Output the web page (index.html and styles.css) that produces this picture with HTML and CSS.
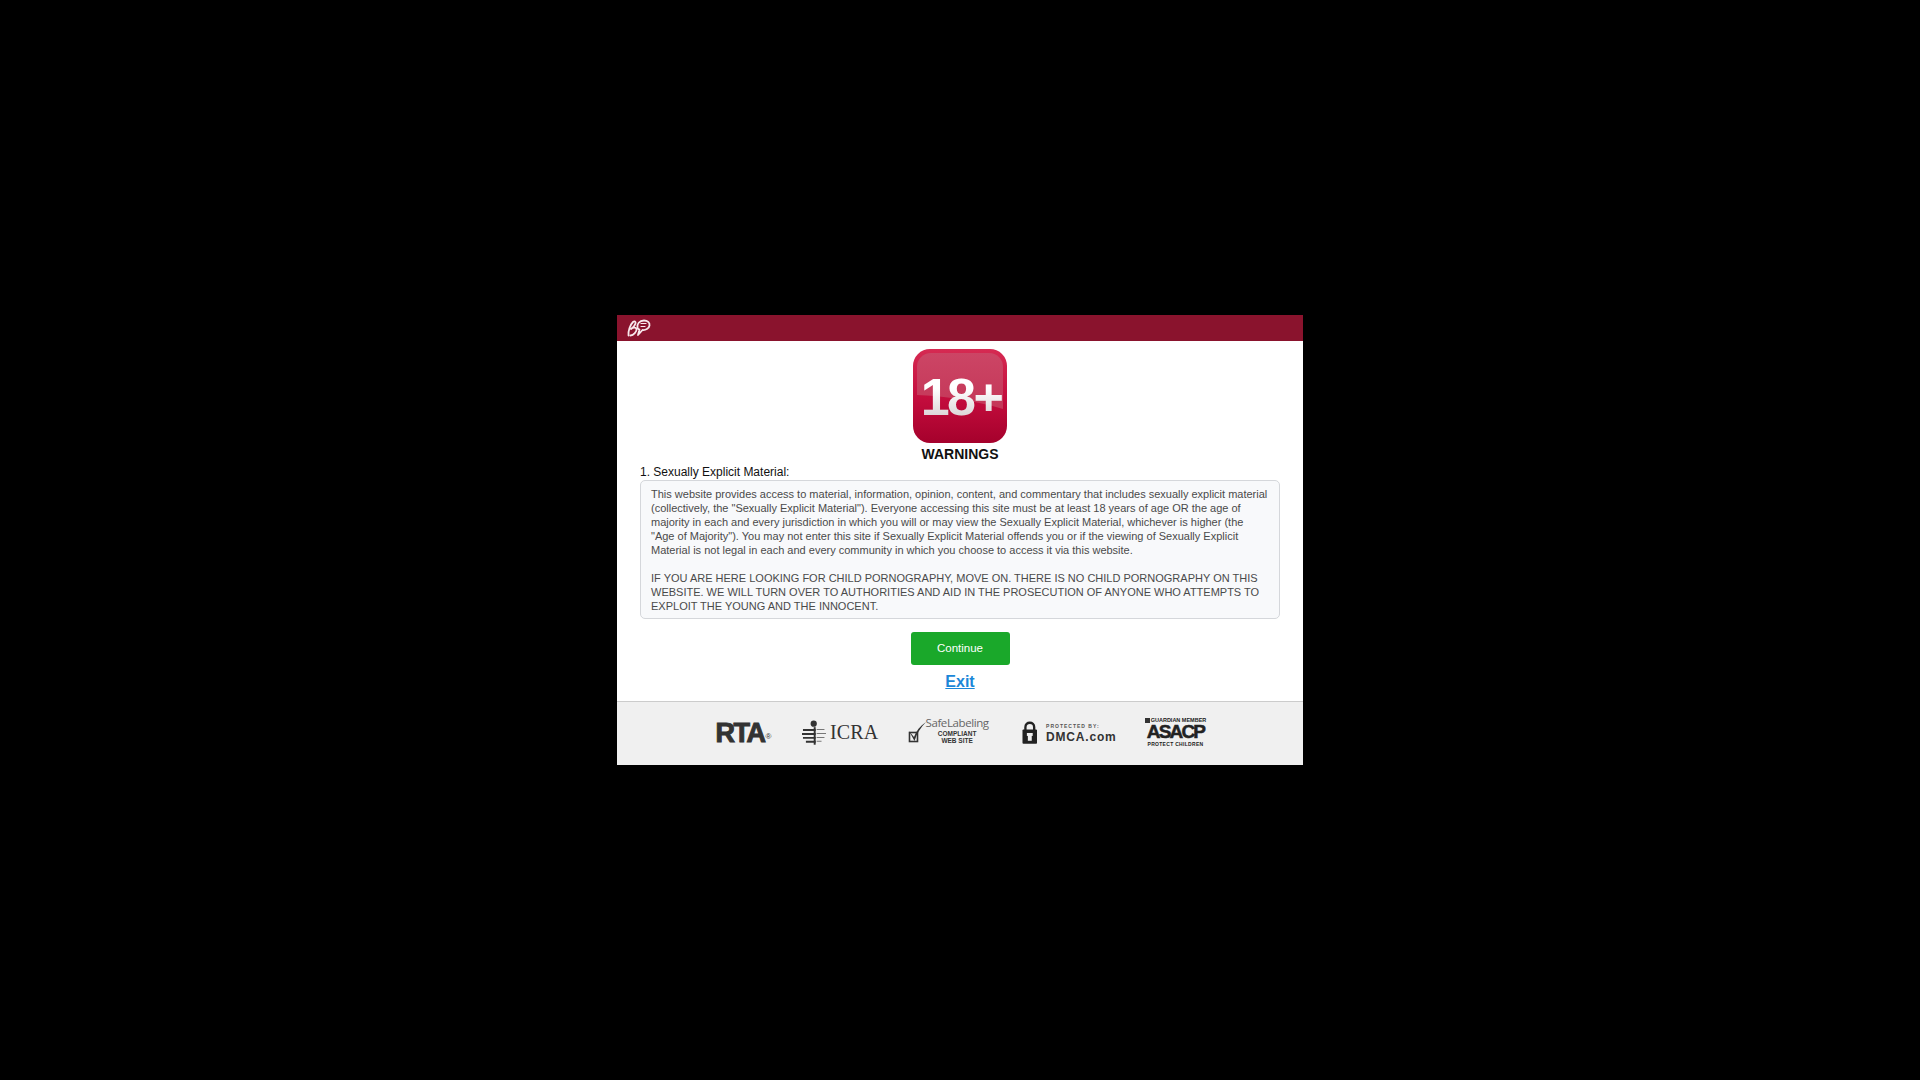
FILE: index.html
```html
<!DOCTYPE html>
<html lang="en">
<head>
    <meta charset="UTF-8">
    <meta name="viewport" content="width=device-width, initial-scale=1.0">
    <title>Warnings</title>
    <link rel="stylesheet" href="styles.css">
</head>
<body>

    <div class="modal">

        <!-- HEADER -->
        <div class="modal-header">
            <svg class="brand" width="24" height="18" viewBox="0 0 24 18" fill="none" stroke="#f8e8ec" stroke-width="1.800" stroke-linecap="round" stroke-linejoin="round">
                <path d="M1.500 16.500C1 12 3 6 6 3C7.500 1.800 9 2.500 8.500 4.500C8 6.500 6 8.500 4 10C6 8.500 9 8 9.500 10C10 12.500 6.500 16.500 3.500 16.500"/>
                <path d="M10.500 9C9.500 5 12.500 1.500 17 1.500C20.500 1.500 23 3.500 22.500 6.500C22 9.500 18.500 11.500 15.500 11L11 16L12.500 10.500C11.500 10.500 11 10 10.500 9Z"/>
                <path d="M14 4.500H19M14 7.500H18" stroke-width="1.200"/>
            </svg>
        </div>

        <!-- BODY -->
        <div class="modal-body">
            <svg class="age-icon" width="94" height="94" viewBox="0 0 94 94">
                <defs>
                    <linearGradient id="iconBase" x1="0" y1="0" x2="0" y2="1">
                        <stop offset="0" stop-color="#d62a52"/>
                        <stop offset="0.55" stop-color="#c20c3c"/>
                        <stop offset="1" stop-color="#a5012c"/>
                    </linearGradient>
                    <linearGradient id="iconGloss" x1="0" y1="0" x2="0" y2="1">
                        <stop offset="0" stop-color="#cc4565"/>
                        <stop offset="1" stop-color="#c43758"/>
                    </linearGradient>
                    <linearGradient id="digits" x1="0" y1="0" x2="0" y2="1">
                        <stop offset="0.35" stop-color="#ffffff"/>
                        <stop offset="1" stop-color="#cfc7c9"/>
                    </linearGradient>
                    <clipPath id="inner"><rect x="4" y="4" width="86" height="83" rx="14"/></clipPath>
                </defs>
                <rect width="94" height="94" rx="17" fill="url(#iconBase)"/>
                <path d="M4 46C30 47 60 51 90 60V4H4Z" fill="url(#iconGloss)" clip-path="url(#inner)"/>
                <text class="age-text" x="48" y="66" text-anchor="middle" fill="url(#digits)">18+</text>
            </svg>
            <div class="title">WARNINGS</div>

            <div class="section-label">1. Sexually Explicit Material:</div>
            <div class="terms">
                <p>This website provides access to material, information, opinion, content, and commentary that includes sexually explicit material (collectively, the "Sexually Explicit Material"). Everyone accessing this site must be at least 18 years of age OR the age of majority in each and every jurisdiction in which you will or may view the Sexually Explicit Material, whichever is higher (the "Age of Majority"). You may not enter this site if Sexually Explicit Material offends you or if the viewing of Sexually Explicit Material is not legal in each and every community in which you choose to access it via this website.</p>
                <p>IF YOU ARE HERE LOOKING FOR CHILD PORNOGRAPHY, MOVE ON. THERE IS NO CHILD PORNOGRAPHY ON THIS WEBSITE. WE WILL TURN OVER TO AUTHORITIES AND AID IN THE PROSECUTION OF ANYONE WHO ATTEMPTS TO EXPLOIT THE YOUNG AND THE INNOCENT.</p>
            </div>

            <button class="btn-continue">Continue</button>
            <a class="exit-link" href="#">Exit</a>
        </div>

        <!-- FOOTER LOGOS -->
        <div class="modal-footer">
            <div class="logo logo-rta"><span class="rta-name">RTA</span><span class="rta-reg">®</span></div>

            <div class="logo logo-icra">
                <svg width="25" height="26" viewBox="0 0 25 26">
                    <circle cx="12" cy="3.500" r="3.200" fill="#333"/>
                    <path d="M1 9H14V11H1ZM0 13H14V15H0ZM1 17H14V19H1ZM4 21H14V23H4Z" fill="#333"/>
                    <path d="M15 9H23V10H15ZM15 13H25V14H15ZM15 17H23V18H15ZM15 21H20V22H15Z" fill="#777"/>
                    <path d="M13 7V25" stroke="#333" stroke-width="2"/>
                </svg>
                <span class="icra-name">ICRA</span>
            </div>

            <div class="logo logo-safe">
                <svg width="18" height="24" viewBox="0 0 18 24" fill="none">
                    <rect x="1.500" y="11.500" width="8" height="9" stroke="#333" stroke-width="1.600"/>
                    <path d="M1 10L6 16C8 10 12 5 18 1C13 6 9 12 6.500 20Z" fill="#333"/>
                </svg>
                <div class="safe-text">
                    <span class="safe-name">SafeLabeling</span>
                    <span class="safe-sub">COMPLIANT</span>
                    <span class="safe-sub">WEB SITE</span>
                </div>
            </div>

            <div class="logo logo-dmca">
                <svg width="16" height="23" viewBox="0 0 16 23">
                    <path d="M3.500 10V6C3.500 3 5.500 1.500 8 1.500C10.500 1.500 12.500 3 12.500 6V10" fill="none" stroke="#222" stroke-width="2.400"/>
                    <rect x="0.500" y="8.500" width="15" height="14.500" rx="1" fill="#222"/>
                    <rect x="6" y="12" width="4" height="8" fill="#f0f0f0"/>
                    <rect x="5" y="12" width="6" height="3" fill="#f0f0f0"/>
                </svg>
                <div class="dmca-text">
                    <span class="dmca-small">PROTECTED BY:</span>
                    <span class="dmca-name">DMCA.com</span>
                </div>
            </div>

            <div class="logo logo-asacp">
                <span class="asacp-top"><i class="asacp-box"></i>GUARDIAN MEMBER</span>
                <span class="asacp-name">ASACP</span>
                <span class="asacp-bottom">PROTECT CHILDREN</span>
            </div>
        </div>

    </div>

</body>
</html>
```

FILE: styles.css
```css
html, body {
    height: 100%;
}
body {
    margin: 0;
    background: #000;
    font-family: 'Liberation Sans', Arial, sans-serif;
    display: flex;
    align-items: center;
    justify-content: center;
}
.modal {
    width: 686px;
    height: 450px;
    background: #fff;
    display: flex;
    flex-direction: column;
}
.modal-header {
    height: 26px;
    background: #8a132d;
    padding: 4px 0 0 10px;
    box-sizing: border-box;
}
.brand {
    display: block;
}
.modal-body {
    flex: 1;
    padding: 8px 23px 0;
    display: flex;
    flex-direction: column;
    align-items: center;
}
.age-icon {
    display: block;
}
.age-text {
    font-family: 'Liberation Sans', Arial, sans-serif;
    font-weight: bold;
    font-size: 52px;
    letter-spacing: -2.500px;
}
.title {
    font-size: 14px;
    font-weight: bold;
    line-height: 16px;
    margin-top: 3px;
    color: #111;
}
.section-label {
    align-self: flex-start;
    font-size: 12px;
    line-height: 14px;
    margin-top: 3px;
    color: #111;
}
.terms {
    align-self: stretch;
    height: 139px;
    box-sizing: border-box;
    margin-top: 1px;
    padding: 6px 10px;
    background: #f8f9fb;
    border: 1px solid #d5d7db;
    border-radius: 5px;
    font-size: 11px;
    line-height: 14px;
    color: #4a4a4a;
    overflow: hidden;
}
.terms p {
    margin: 0 0 14px;
}
.btn-continue {
    width: 99px;
    height: 33px;
    margin-top: 13px;
    padding: 0 0 2px;
    background: #1aa82a;
    color: #fff;
    border: none;
    border-radius: 3px;
    font-family: inherit;
    font-size: 11.500px;
}
.exit-link {
    margin-top: 8px;
    font-size: 16px;
    line-height: 18px;
    font-weight: bold;
    color: #1b87d8;
}
.modal-footer {
    height: 64px;
    box-sizing: border-box;
    padding-bottom: 2px;
    background: #f0f0f0;
    border-top: 1px solid #ccc;
    display: flex;
    align-items: center;
    justify-content: center;
    gap: 30px;
    color: #333;
}
.logo {
    display: flex;
    align-items: center;
    flex-shrink: 0;
}

/* RTA */
.logo-rta {
    width: 58px;
    align-items: flex-end;
}
.rta-name {
    font-size: 27px;
    line-height: 24px;
    font-weight: bold;
    letter-spacing: -1.500px;
    -webkit-text-stroke: 1px #333;
}
.rta-reg {
    font-size: 8px;
    line-height: 17px;
    margin-left: 1px;
}

/* ICRA */
.logo-icra {
    width: 75px;
    gap: 4px;
}
.logo-icra svg {
    margin-left: -2px;
}
.icra-name {
    font-family: 'Liberation Serif', serif;
    font-size: 20px;
    letter-spacing: 0.200px;
}

/* SafeLabeling */
.logo-safe {
    width: 83px;
}
.logo-safe svg {
    margin-left: -1px;
}
.safe-text {
    display: flex;
    flex-direction: column;
    align-items: center;
    color: #444;
    margin-top: -5px;
}
.safe-name {
    font-family: 'Open Sans', sans-serif;
    font-size: 11.500px;
    line-height: 14px;
    letter-spacing: -0.400px;
    color: #666;
}
.safe-sub {
    font-size: 6.500px;
    line-height: 7px;
    font-weight: bold;
    color: #333;
}

/* DMCA */
.logo-dmca {
    width: 95px;
    gap: 9px;
}
.dmca-text {
    display: flex;
    flex-direction: column;
    gap: 1px;
}
.dmca-small {
    font-size: 5px;
    line-height: 8px;
    font-weight: bold;
    letter-spacing: 1px;
    color: #555;
}
.dmca-name {
    font-size: 12px;
    line-height: 13px;
    font-weight: bold;
    letter-spacing: 0.800px;
}

/* ASACP */
.logo-asacp {
    flex-direction: column;
    width: 58px;
    color: #222;
}
.asacp-top {
    font-size: 5.500px;
    line-height: 7px;
    font-weight: bold;
    white-space: nowrap;
    display: flex;
    align-items: center;
    gap: 1px;
}
.asacp-box {
    width: 5px;
    height: 5px;
    background: #333;
}
.asacp-name {
    font-size: 19px;
    line-height: 16px;
    font-weight: bold;
    letter-spacing: -1.800px;
    -webkit-text-stroke: 0.500px #222;
}
.asacp-bottom {
    font-size: 5px;
    line-height: 8px;
    font-weight: bold;
    letter-spacing: 0.300px;
    white-space: nowrap;
}
```
